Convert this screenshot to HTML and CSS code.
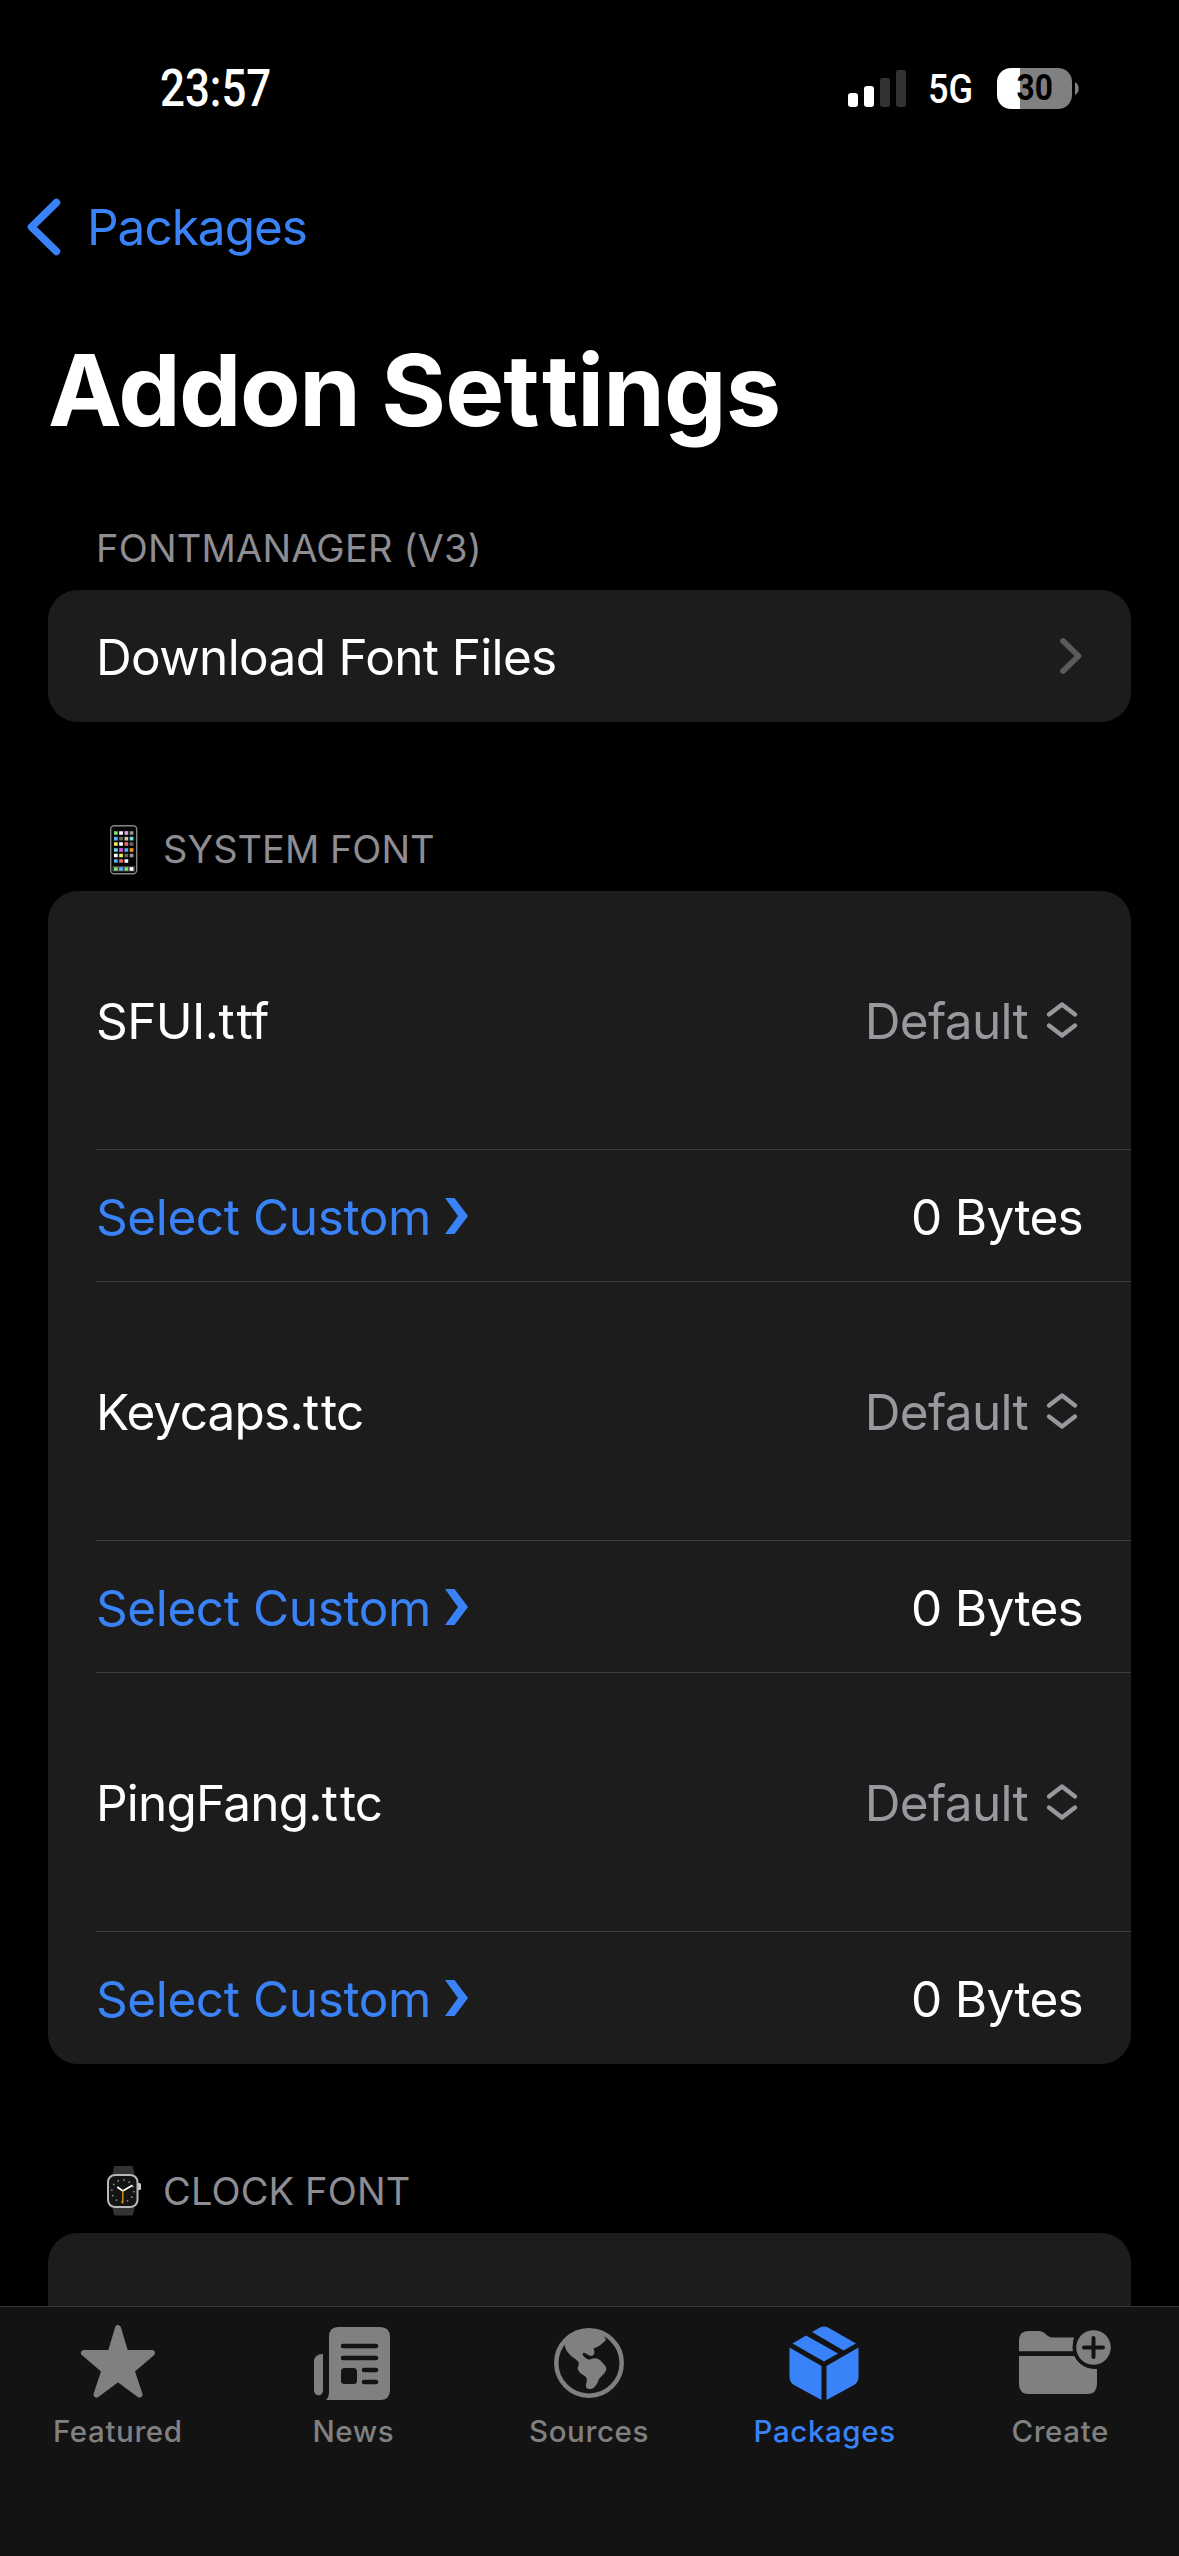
FILE: index.html
```html
<!DOCTYPE html>
<html lang="en">
<head>
<meta charset="utf-8">
<title>Addon Settings</title>
<link rel="stylesheet" href="styles.css">
</head>
<body>
<div class="screen">
  <header class="status">
    <span class="time">23:57</span>
    <div class="indicators">
      <svg class="signal" viewBox="0 0 58 37"><g fill="#fff"><rect y="23" width="10" height="14" rx="3"/><rect x="16" y="16" width="10" height="21" rx="3"/></g><g fill="#333"><rect x="32" y="8" width="10" height="29" rx="3"/><rect x="48" width="10" height="37" rx="3"/></g></svg>
      <span class="network">5G</span>
      <div class="battery"><span class="level">30</span></div>
      <svg class="nub" viewBox="0 0 4 13"><path d="M0 0C5 2.500 5 10.500 0 13Z" fill="#808080"/></svg>
    </div>
  </header>

  <nav class="back">
    <svg class="back-icon" viewBox="0 0 34 58"><path d="M29.500 4.500L4.500 29L29.500 53.500" fill="none" stroke="currentColor" stroke-width="7.500" stroke-linecap="round" stroke-linejoin="round"/></svg>
    <span class="back-label">Packages</span>
  </nav>

  <h1 class="title">Addon <span class="word">Se<span class="tt">t</span>tings</span></h1>

  <main class="content">
    <h2 class="section-head first"><span class="w-manager">FONTMANAGER (V3)</span></h2>
    <section class="card">
      <div class="row link">
        <span class="w-download">Download Font Files</span>
        <svg class="disclosure" viewBox="0 0 22 36"><path d="M3 3L18.500 18L3 33" fill="none" stroke="#5a5a5d" stroke-width="5.800" stroke-linecap="round" stroke-linejoin="round"/></svg>
      </div>
    </section>

    <h2 class="section-head">
      <svg class="emoji" viewBox="0 0 50 65"><rect x="10.700" y="10.700" width="26" height="48" rx="3.500" fill="#050505" stroke="#858588" stroke-width="1.400"/><rect x="12.500" y="51" width="22.500" height="5.500" fill="#444"/>
        <g stroke-width="3.700"><path stroke="#7ee07a" d="M14 18h3.700M14 54h3.700M24.500 54h3.700"/><path stroke="#fff" d="M19.200 18h3.700M19.200 29h3.700M14 40.500h3.700M24.500 46h3.700M29.700 54h3.700"/><path stroke="#d9a3f0" d="M24.500 18h3.700"/><path stroke="#999" d="M29.700 18h3.700M29.700 40.500h3.700"/><path stroke="#5bb5f5" d="M14 23.700h3.700M14 46h3.700M24.500 35h3.700M19.200 54h3.700"/><path stroke="#666" d="M19.200 23.700h3.700M29.700 29h3.700M24.500 40.500h3.700"/><path stroke="#e0c0a0" d="M24.500 23.700h3.700"/><path stroke="#6fdcf0" d="M29.700 23.700h3.700M14 35h3.700"/><path stroke="#f6ee60" d="M14 29h3.700M19.200 40.500h3.700"/><path stroke="#f0706a" d="M24.500 29h3.700M19.200 46h3.700"/><path stroke="#d857e0" d="M19.200 35h3.700"/><path stroke="#f09a2a" d="M29.700 35h3.700"/></g></svg>
      <span class="w-system">SYSTEM FONT</span>
    </h2>
    <section class="card">
      <div class="row tall"><span class="w-sfui">SFUI.<span class="tt">t</span>tf</span><span class="picker"><span class="w-default">Default</span><svg class="updown" viewBox="0 0 30 36"><path d="M2 12.500L15 2.500L28 12.500M2 23.500L15 33.500L28 23.500"/></svg></span></div>
      <div class="row"><a class="select"><span class="w-select">Select Custom</span><svg class="arrow" viewBox="0 0 23 36"><path d="M0 0H9.500L23 18L9.500 36H0L13 18Z"/></svg></a><span class="w-bytes">0 Bytes</span></div>
      <div class="row tall"><span class="w-keycaps">Keycaps.<span class="tt">t</span>tc</span><span class="picker"><span class="w-default">Default</span><svg class="updown" viewBox="0 0 30 36"><path d="M2 12.500L15 2.500L28 12.500M2 23.500L15 33.500L28 23.500"/></svg></span></div>
      <div class="row"><a class="select"><span class="w-select">Select Custom</span><svg class="arrow" viewBox="0 0 23 36"><path d="M0 0H9.500L23 18L9.500 36H0L13 18Z"/></svg></a><span class="w-bytes">0 Bytes</span></div>
      <div class="row tall"><span class="w-pingfang">PingFang.<span class="tt">t</span>tc</span><span class="picker"><span class="w-default">Default</span><svg class="updown" viewBox="0 0 30 36"><path d="M2 12.500L15 2.500L28 12.500M2 23.500L15 33.500L28 23.500"/></svg></span></div>
      <div class="row"><a class="select"><span class="w-select">Select Custom</span><svg class="arrow" viewBox="0 0 23 36"><path d="M0 0H9.500L23 18L9.500 36H0L13 18Z"/></svg></a><span class="w-bytes">0 Bytes</span></div>
    </section>

    <h2 class="section-head">
      <svg class="emoji" viewBox="0 0 50 65"><path d="M12.500 17L14 10Q14.200 9 15.500 9H31.500Q32.800 9 33 10L34.500 17ZM12.500 51L14 57.500Q14.200 58.500 15.500 58.500H31.500Q32.800 58.500 33 57.500L34.500 51Z" fill="#333"/><rect x="37" y="26" width="4" height="7" rx="1.500" fill="#ccc"/><rect x="8" y="18" width="29.500" height="32" rx="7" fill="#141414" stroke="#b8b8b8" stroke-width="2"/><circle cx="22.800" cy="34" r="11" fill="none" stroke="#888" stroke-width="1.800" stroke-dasharray="1.500 4.260"/><path d="M17.300 30L22.800 34L32.500 28.300" fill="none" stroke="#fff" stroke-width="1.800"/><path d="M22.800 33.500V46.500" stroke="#d08a20" stroke-width="1.500"/></svg>
      <span class="w-clock">CLOCK FONT</span>
    </h2>
    <section class="card cut"></section>
  </main>

  <footer class="tabs">
    <div class="tab">
      <svg viewBox="0 0 100 80"><path d="M50 8L57.500 33H84L63.500 50.500L71.500 74.500L50 58.500L28.500 74.500L36.500 50.500L16 33H42.500Z" fill="currentColor" stroke="currentColor" stroke-width="6" stroke-linejoin="round"/></svg>
      <span class="w-featured">Featured</span>
    </div>
    <div class="tab">
      <svg viewBox="0 0 100 80"><path d="M35 7H77Q87 7 87 17V70Q87 80 77 80H23Q26 77 26 72V17Q26 7 35 7ZM11 42Q11 34 20 34V70C20 77 11 77 11 70Z" fill="currentColor"/><path d="M40 26H73M40 38H73M61 50H73M61 62H73" stroke="#131313" stroke-width="4.400" stroke-linecap="round"/><rect x="38" y="48" width="16" height="16" rx="3.500" fill="#131313"/></svg>
      <span class="w-news">News</span>
    </div>
    <div class="tab">
      <svg viewBox="0 0 100 80"><circle cx="50" cy="43" r="32.700" fill="none" stroke="currentColor" stroke-width="4.500"/><path d="M25.500 24C31 14 42 10 50 10C58 10 64 14 67 19.500C63 25 58.500 27 54.500 28.500C56.500 33 55 36 52 36C49.500 36 47.500 33 45 32.700C43 33.500 43.500 35.500 45.500 37C47.500 39 49.500 40.300 52 39C56 37.500 59 38 62 41C64.500 44.500 67.500 46 67.200 49C66.500 54 62 56 60 59C58.500 64 55 69 51.500 69C47.500 69 46.500 67 47 64.500C48 61 48.500 58.500 46.500 56.500C42 53.500 38.500 51.500 38.700 47.500C40.500 44 40.500 42.500 37.500 40C32.500 36.500 26 31.500 25.500 24Z" fill="currentColor"/></svg>
      <span class="w-sources">Sources</span>
    </div>
    <div class="tab active">
      <svg viewBox="1 0 100 80"><g fill="currentColor"><path d="M15.500 27.500L47.500 46V80L20 65Q15.500 62 15.500 57ZM84.500 27.500L52.500 46V80L80 65Q84.500 62 84.500 57ZM18.500 23.500L32 15.500L64 33.500L50 41.500ZM38 12L46 7.500Q50 5.500 54 7.500L82 23.500L69.500 30.500Z"/></g></svg>
      <span class="w-tabpack">Packages</span>
    </div>
    <div class="tab">
      <svg viewBox="0 0 100 80"><path d="M9 36V21Q9 11 18 11H28C36 11 36 17.500 43 17.500H64A25 25 0 0 0 64 31.500H9ZM9 36H65A22 22 0 0 0 87 49V64Q87 74 77 74H19Q9 74 9 64Z" fill="currentColor"/><path d="M9 33.500H64" stroke="#131313" stroke-width="4.200"/><circle cx="83.500" cy="27.500" r="21" fill="#131313"/><circle cx="83.500" cy="27.500" r="17.300" fill="currentColor"/><path d="M83.500 18V37M74 27.500H93" stroke="#131313" stroke-width="4" stroke-linecap="round"/></svg>
      <span class="w-create">Create</span>
    </div>
  </footer>
</div>
</body>
</html>
```
FILE: styles.css
```css
* { box-sizing: border-box; }
body { margin: 0; background: #000; }
.screen {
  width: 1179px; height: 2556px; overflow: hidden;
  display: flex; flex-direction: column;
  background: #000; color: #fff;
  font: 400 49.500px/60px Inter, "Liberation Sans", sans-serif;
}
.screen svg { display: block; flex: none; overflow: visible; }
.screen span { white-space: nowrap; }

.status { flex: none; height: 176px; padding: 58px 100px 0 159.500px; display: flex; justify-content: space-between; align-items: flex-start; font-family: Roboto, sans-serif; }
.time { padding-top: 1px; font-size: 51px; font-weight: 500; transform: scaleX(.86); transform-origin: 0 50%; }
.indicators { display: flex; align-items: center; margin-top: -1px; }
.signal { width: 58px; height: 37px; margin-right: 22px; }
.network { width: 44px; padding-top: 2px; margin-right: 25px; font-size: 41px; font-weight: 500; transform: scaleX(.88); transform-origin: 0 50%; }
.battery { width: 75px; height: 41px; border-radius: 14px; background: linear-gradient(90deg, #fff 23px, #808080 23px); display: flex; justify-content: center; align-items: center; }
.level { color: #000; font-size: 36px; font-weight: 700; transform: scaleX(.88); }
.nub { width: 4px; height: 13px; margin-left: 3px; }

.back { flex: none; height: 102px; padding-left: 27px; display: flex; align-items: center; gap: 26px; color: #3a82f7; }
.back-icon { width: 34px; height: 58px; }
.back-label { letter-spacing: -1px; }
.title { flex: none; margin: 0; height: 232px; padding: 52px 0 0 48px; font-size: 99px; line-height: 120px; font-weight: 700; letter-spacing: -1.500px; }
.word { letter-spacing: -.9px; }
/* opens up the tight "tt" pair */
.tt { letter-spacing: 2px; }
.title .tt { letter-spacing: 2.500px; }

.content { flex: 1; min-height: 0; overflow: hidden; padding: 0 48px; }
.section-head { margin: 0; height: 169px; padding: 104px 48px 0; display: flex; font-size: 38px; line-height: 46px; font-weight: 400; color: #8d8d93; align-items: flex-start; }
.section-head.first { height: 80px; padding-top: 15px; letter-spacing: .2px; }
.emoji { width: 50px; height: 65px; margin: -11px 13px 0 4px; }
.card { border-radius: 30px; background: #1c1c1c; }
.card.cut { height: 200px; }
.row { height: 132px; margin-left: 48px; padding-right: 48px; display: flex; justify-content: space-between; align-items: center; border-bottom: 1px solid #3c3c3d; letter-spacing: -.6px; }
.row:last-child { border-bottom-color: transparent; }
.row.tall { height: 259px; }
.row [class^="w-"] { padding-top: 2px; }
.w-download { letter-spacing: -.65px; }
.w-default, .w-bytes { letter-spacing: -.7px; }
.w-keycaps, .w-pingfang { letter-spacing: -.8px; }
.w-select { letter-spacing: -.4px; }
.w-clock { letter-spacing: .15px; }
.disclosure { width: 22px; height: 36px; margin-right: 1px; }
.picker { display: flex; align-items: center; gap: 19px; padding-right: 6px; color: #98989f; }
.updown { width: 30px; height: 36px; fill: none; stroke: #98989f; stroke-width: 4.400; stroke-linecap: round; stroke-linejoin: round; }
.select { display: flex; align-items: center; gap: 14px; color: #3a82f7; }
.arrow { width: 23px; height: 36px; fill: currentColor; }

.tabs { flex: none; height: 250px; padding: 13px 1px 0 0; border-top: 1px solid #353535; background: #131313; display: grid; grid-template-columns: repeat(5, 1fr); }
.tab { display: flex; flex-direction: column; align-items: center; color: #808080; font-size: 29.500px; line-height: 36px; font-weight: 500; letter-spacing: .6px; gap: 13px; }
.tab svg { width: 100px; height: 80px; }
.tab.active { color: #3a82f7; }
```
